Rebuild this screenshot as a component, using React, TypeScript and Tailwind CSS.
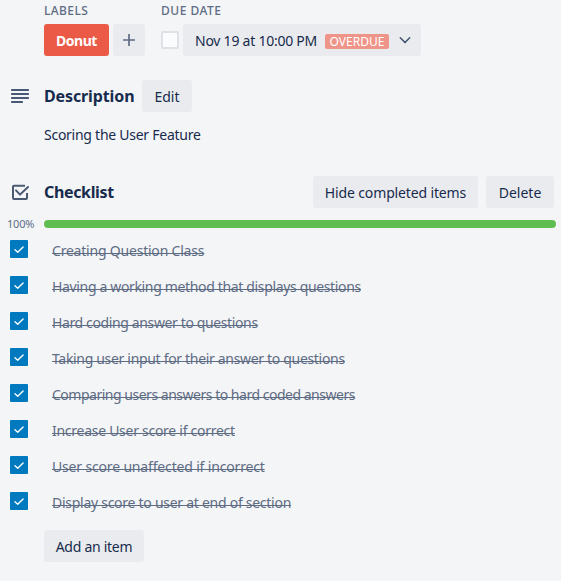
import React from "react";

const items = [
  { text: "Creating Question Class", fit: "tracking-[-0.21px]" },
  { text: "Having a working method that displays questions", fit: "tracking-[-0.345px]" },
  { text: "Hard coding answer to questions", fit: "tracking-[-0.375px]" },
  { text: "Taking user input for their answer to questions", fit: "tracking-[-0.32px]" },
  { text: "Comparing users answers to hard coded answers", fit: "tracking-[-0.485px]" },
  { text: "Increase User score if correct", fit: "tracking-[-0.275px]" },
  { text: "User score unaffected if incorrect", fit: "tracking-[-0.165px]" },
  { text: "Display score to user at end of section", fit: "tracking-[-0.27px]" },
];

function GreyButton({ children, className }: { children: React.ReactNode; className: string }) {
  return (
    <button
      className={`flex h-8 shrink-0 items-center justify-center whitespace-nowrap rounded-[3px] bg-[#eaebee] pt-0.5 text-sm leading-5 text-[#172b4d] ${className}`}
    >
      {children}
    </button>
  );
}

function DescriptionIcon() {
  return (
    <svg className="h-6 w-6" viewBox="0 0 24 24" fill="#4a5878">
      <rect x="3" y="5" width="18" height="2" rx="0.4" />
      <rect x="3" y="9" width="18" height="2" rx="0.4" />
      <rect x="3" y="13" width="18" height="2" rx="0.4" />
      <rect x="3" y="17" width="12" height="2" rx="0.4" />
    </svg>
  );
}

function ChecklistIcon() {
  return (
    <svg className="h-6 w-6" viewBox="0 0 24 24" fill="none" stroke="#4a5872" strokeWidth="2" strokeLinejoin="round">
      <path d="M17 5.7H6a1 1 0 0 0-1 1V18a1 1 0 0 0 1 1h12a1 1 0 0 0 1-1v-5" />
      <path d="M8 10.4l4 4.2L20 7" strokeLinecap="round" />
    </svg>
  );
}

export default function App() {
  return (
    <main className="h-[581px] w-[561px] overflow-hidden bg-[#f4f5f7] font-['Noto_Sans',sans-serif] text-sm text-[#172b4d]">
      <section className="flex pl-11 pt-px">
        <div className="w-[117px]">
          <h3 className="h-[23px] text-xs font-medium leading-5 tracking-[0.4px] text-[#5e6c84]">LABELS</h3>
          <div className="flex gap-1">
            <span className="flex h-8 w-[65px] items-center justify-center rounded-[3px] bg-[#eb5a46] pt-0.5 font-bold tracking-[-0.5px] text-white">
              Donut
            </span>
            <button className="flex h-8 w-8 items-center justify-center rounded-[3px] bg-[#eaebee]">
              <svg className="h-4 w-4" viewBox="0 0 16 16" stroke="#5e6c84" strokeWidth="1.7">
                <path d="M8 2v12M2 8h12" />
              </svg>
            </button>
          </div>
        </div>
        <div>
          <h3 className="h-[23px] text-xs font-medium leading-5 tracking-[0.5px] text-[#5e6c84]">DUE DATE</h3>
          <div className="flex items-center gap-1">
            <span className="h-[18px] w-[18px] rounded-xs border-2 border-[#dfe1e6] bg-[#fafbfc]" />
            <button className="flex h-8 w-[238px] items-center rounded-[3px] bg-[#eaebee] pl-3 text-left text-sm">
              <span className="w-[130px] whitespace-nowrap pt-0.5 tracking-[-0.24px]">Nov 19 at 10:00 PM</span>
              <span className="mt-0.5 flex h-[15px] w-16 items-center justify-center rounded-xs bg-[#ef9488] text-xs leading-[15px] text-white">
                OVERDUE
              </span>
              <svg className="ml-2 h-4 w-4" viewBox="0 0 16 16" fill="none" stroke="#42526e" strokeWidth="1.5" strokeLinecap="round" strokeLinejoin="round">
                <path d="M3.3 5.8L8 10.6l4.7-4.8" />
              </svg>
            </button>
          </div>
        </div>
      </section>

      <section className="mt-6">
        <div className="flex items-center pl-2">
          <DescriptionIcon />
          <h2 className="ml-3 w-[98px] whitespace-nowrap text-base font-bold leading-5 tracking-[-0.12px]">Description</h2>
          <GreyButton className="w-[50px]">Edit</GreyButton>
        </div>
        <p className="mt-[13px] pl-11 leading-5 tracking-[-0.26px]">Scoring the User Feature</p>
      </section>

      <section className="mt-[31px]">
        <div className="flex items-center pl-2 pr-[7px]">
          <ChecklistIcon />
          <h2 className="ml-3 flex-1 text-base font-bold leading-5 tracking-[-0.35px]">Checklist</h2>
          <GreyButton className="mr-2 w-[165px] tracking-[-0.14px]">Hide completed items</GreyButton>
          <GreyButton className="w-[68px]">Delete</GreyButton>
        </div>
        <div className="mt-2.5 flex h-3 items-center pr-[5px]">
          <span className="w-11 pl-[7px] text-[11px] leading-3 tracking-[-0.2px] text-[#5e6c84]">100%</span>
          <div className="h-2 flex-1 rounded-full bg-[#61bd4f]" />
        </div>
        <ul className="mt-2.5 pl-2.5">
          {items.map((item) => (
            <li key={item.text} className="flex h-9 items-start">
              <span className="flex h-[18px] w-[18px] items-center justify-center rounded-[1px] bg-[#0079bf]">
                <svg className="h-[18px] w-[18px]" viewBox="0 0 18 18" fill="none" stroke="white" strokeWidth="1.4" strokeLinecap="round" strokeLinejoin="round">
                  <path d="M5 9.8l2.7 2.4 5.4-5.2" />
                </svg>
              </span>
              <span
                className={`ml-6 mt-px whitespace-nowrap leading-5 text-[#5e6c84] underline decoration-1 underline-offset-[-3px] [text-decoration-skip-ink:none] ${item.fit}`}
              >
                {item.text}
              </span>
            </li>
          ))}
        </ul>
        <div className="mt-0.5 pl-11">
          <GreyButton className="w-[100px] tracking-[-0.27px]">Add an item</GreyButton>
        </div>
      </section>
    </main>
  );
}
